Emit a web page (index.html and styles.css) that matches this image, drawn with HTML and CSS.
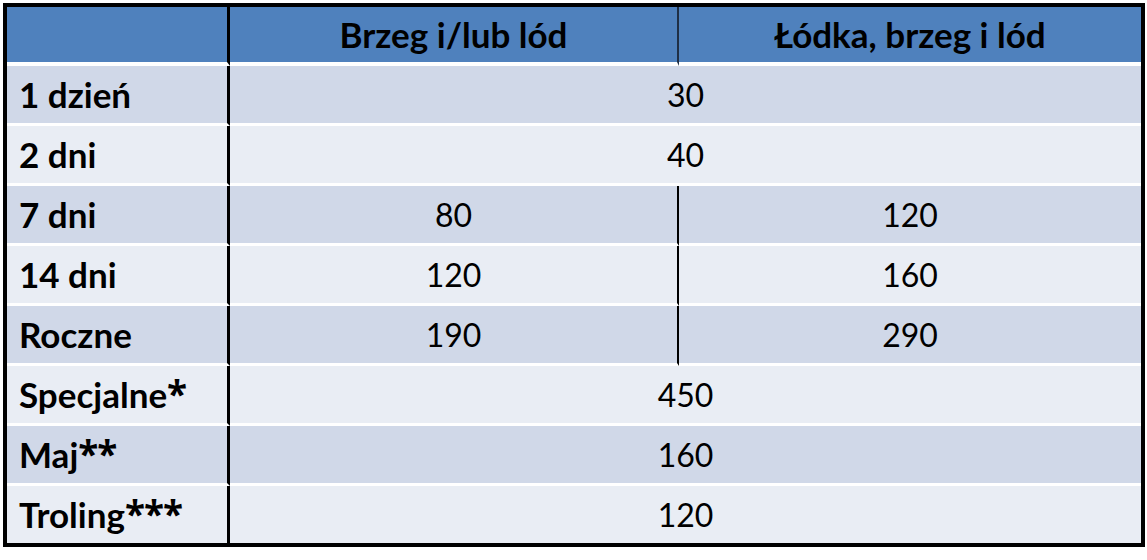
FILE: index.html
```html
<!DOCTYPE html>
<html lang="pl">
<head>
<meta charset="utf-8">
<title>Cennik</title>
<link rel="stylesheet" href="styles.css">
</head>
<body>
<table class="price">
  <thead>
    <tr>
      <th class="label"></th>
      <th class="col-a">Brzeg i/lub lód</th>
      <th class="col-b">Łódka, brzeg i lód</th>
    </tr>
  </thead>
  <tbody>
    <tr class="odd"><td class="label">1 dzień</td><td class="span" colspan="2">30</td></tr>
    <tr class="even"><td class="label">2 dni</td><td class="span" colspan="2">40</td></tr>
    <tr class="odd"><td class="label">7 dni</td><td class="col-a">80</td><td class="col-b">120</td></tr>
    <tr class="even"><td class="label">14 dni</td><td class="col-a">120</td><td class="col-b">160</td></tr>
    <tr class="odd"><td class="label">Roczne</td><td class="col-a">190</td><td class="col-b">290</td></tr>
    <tr class="even"><td class="label">Specjalne<span class="ast">*</span></td><td class="span" colspan="2">450</td></tr>
    <tr class="odd"><td class="label">Maj<span class="ast">**</span></td><td class="span" colspan="2">160</td></tr>
    <tr class="even last"><td class="label">Troling<span class="ast">***</span></td><td class="span" colspan="2">120</td></tr>
  </tbody>
</table>
</body>
</html>
```
FILE: styles.css
```css
html, body {
  margin: 0;
  padding: 0;
  background: #ffffff;
}
body {
  padding: 3px 0 0 3px;
  font-family: Lato, "Open Sans", sans-serif;
  color: #000;
}
.price {
  border-collapse: separate;
  border-spacing: 0;
  border: 4px solid #000;
  width: 1142px;
  table-layout: fixed;
}
.price th, .price td {
  padding: 0;
  font-size: 32px;
  text-align: center;
  vertical-align: middle;
  border-bottom: 3px solid #fff;
  height: 57px;
  line-height: 1;
}
.price th {
  background: #4f81bd;
  font-weight: 700;
  font-size: 35px;
  height: 55px;
  border-bottom-width: 4px;
}
.price th.label, .price td.label {
  width: 208px;
  padding-left: 12px;
  text-align: left;
  font-weight: 700;
  font-size: 35px;
  border-right: 3px solid #000;
}
.ast {
  font-family: "Open Sans", sans-serif;
  font-weight: 700;
  font-size: 1.05em;
  letter-spacing: -1px;
}
.price th.col-a, .price td.col-a {
  width: 447px;
  border-right: 2px solid #000;
}
.price th.col-a {
  border-right-color: #1f2f45;
}
.odd td { background: #d0d8e8; }
.even td { background: #e9edf4; }
.last td { border-bottom: 0; }
```
